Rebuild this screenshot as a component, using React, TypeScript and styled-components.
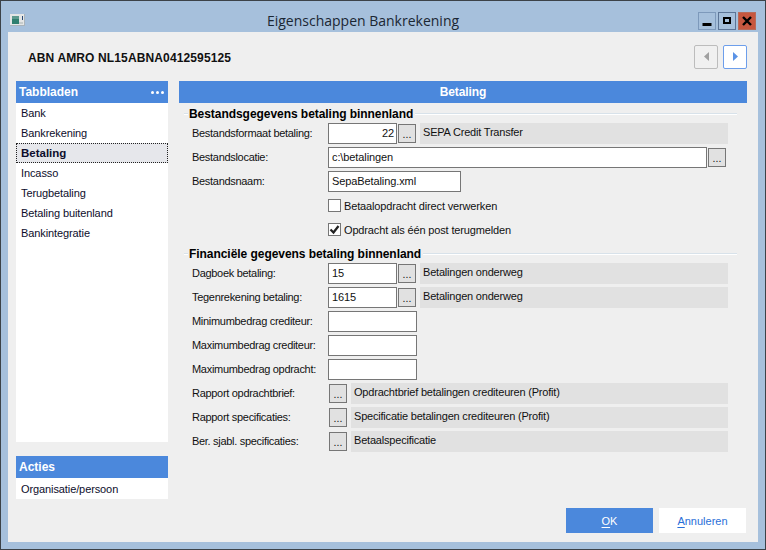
import { createGlobalStyle, styled } from "styled-components";

const GlobalStyle = createGlobalStyle`
  html, body {
    margin: 0;
    padding: 0;
  }
  body {
    width: 766px;
    height: 550px;
    overflow: hidden;
    font-family: "Liberation Sans", Arial, sans-serif;
    font-size: 11px;
    color: #111;
  }
`;

const Window = styled.div`
  box-sizing: border-box;
  width: 766px;
  height: 550px;
  display: flex;
  flex-direction: column;
  background: #a6c0dc;
  border: 1px solid #3c4248;
`;

const TitleBar = styled.div`
  height: 31px;
  flex: none;
  display: flex;
  align-items: flex-start;
  padding: 0 9px;
`;

const AppIcon = styled.svg`
  display: block;
  flex: none;
  margin-top: 13px;
`;

const Title = styled.div`
  flex: 1;
  text-align: center;
  padding-left: 3px;
  font-family: "Open Sans", sans-serif;
  font-size: 14px;
  line-height: 20px;
  color: #1b2733;
  margin-top: 10px;
`;

const WindowButtons = styled.div`
  display: flex;
  flex: none;
  gap: 2px;
  margin-top: 11px;
`;

const WindowButton = styled.div<{ $kind: "min" | "max" | "close" }>`
  box-sizing: border-box;
  width: 18px;
  height: 18px;
  display: flex;
  align-items: center;
  justify-content: center;
  background: ${(p) => (p.$kind === "close" ? "#c7573f" : "#a6c0dc")};
  border: 1px solid ${(p) => (p.$kind === "close" ? "#b86b5a" : p.$kind === "max" ? "#5c7597" : "#7d99bb")};
`;

const Client = styled.div`
  flex: 1;
  margin: 0 7px 7px 7px;
  background: #efefef;
  display: flex;
  flex-direction: column;
  padding: 0 11px 9px 8px;
  min-height: 0;
`;

const Header = styled.div`
  height: 49px;
  flex: none;
  display: flex;
  align-items: center;
  justify-content: space-between;
  padding-left: 12px;
`;

const AccountName = styled.div`
  font-weight: bold;
  font-size: 12px;
  letter-spacing: 0.13px;
  margin-top: 2px;
`;

const NavGroup = styled.div`
  display: flex;
  gap: 5px;
`;

const NavButton = styled.div<{ $active?: boolean }>`
  box-sizing: border-box;
  width: 24px;
  height: 24px;
  display: flex;
  align-items: center;
  justify-content: center;
  border-radius: 2px;
  background: ${(p) => (p.$active ? "#fff" : "#f0f0f0")};
  border: 1px solid ${(p) => (p.$active ? "#6d9eeb" : "#bcbcbc")};
`;

const Columns = styled.div`
  flex: 1;
  display: flex;
  gap: 11px;
  min-height: 0;
`;

const Sidebar = styled.div`
  width: 152px;
  flex: none;
  display: flex;
  flex-direction: column;
  gap: 14px;
  padding-bottom: 34px;
`;

const Panel = styled.div<{ $grow?: boolean }>`
  display: flex;
  flex-direction: column;
  background: #fff;
  flex: ${(p) => (p.$grow ? 1 : "none")};
`;

const PanelHeader = styled.div`
  height: 22px;
  flex: none;
  display: flex;
  align-items: center;
  justify-content: space-between;
  padding: 0 4px 0 3px;
  background: #4b88dc;
  color: #fff;
  font-weight: bold;
  font-size: 12px;
`;

const Dots = styled.span`
  display: flex;
  gap: 2px;
`;

const Dot = styled.i`
  width: 3px;
  height: 3px;
  background: #fff;
  border-radius: 50%;
`;

const TabItem = styled.div<{ $selected?: boolean }>`
  box-sizing: border-box;
  height: 20px;
  display: flex;
  align-items: center;
  padding-left: 4px;
  color: #0d0d2b;
  letter-spacing: ${(p) => (p.$selected ? "0" : "-0.1px")};
  font-size: ${(p) => (p.$selected ? "11.5px" : "11px")};
  font-weight: ${(p) => (p.$selected ? "bold" : "normal")};
  background: ${(p) => (p.$selected ? "#e6e7eb" : "transparent")};
  border: 1px dotted ${(p) => (p.$selected ? "#222" : "transparent")};
`;

const ActionItem = styled(TabItem)`
  height: 21px;
`;

const Main = styled.div`
  flex: 1;
  display: flex;
  flex-direction: column;
  min-width: 0;
`;

const MainHeader = styled.div`
  height: 22px;
  flex: none;
  display: flex;
  align-items: center;
  justify-content: center;
  background: #4b88dc;
  color: #fff;
  font-weight: bold;
  font-size: 12px;
  letter-spacing: -0.1px;
`;

const Form = styled.div`
  flex: 1;
  display: flex;
  flex-direction: column;
  padding-left: 5px;
`;

const GroupTitle = styled.div`
  height: 18px;
  display: flex;
  align-items: center;
  width: 553px;
  margin-top: 2px;
  font-weight: bold;
  font-size: 12px;
  letter-spacing: -0.05px;
  color: #000;

  &::before {
    content: "";
    width: 4px;
    margin-right: 1px;
    flex: none;
    border-top: 1px solid #d8e2ea;
    border-bottom: 1px solid #fff;
  }
  &::after {
    content: "";
    flex: 1;
    margin-left: 2px;
    border-top: 1px solid #d8e2ea;
    border-bottom: 1px solid #fff;
  }
`;

const Row = styled.div`
  box-sizing: border-box;
  height: 24px;
  display: flex;
  align-items: flex-start;
  padding-left: 8px;
`;

const Label = styled.div`
  width: 136px;
  flex: none;
  line-height: 20px;
  letter-spacing: -0.3px;
  white-space: nowrap;
`;

const Input = styled.div<{ $width: number; $right?: boolean }>`
  box-sizing: border-box;
  width: ${(p) => p.$width}px;
  height: 21px;
  flex: none;
  background: #fff;
  border: 1px solid #767676;
  padding: 0 2px 0 3px;
  line-height: 19px;
  letter-spacing: -0.1px;
  text-align: ${(p) => (p.$right ? "right" : "left")};
`;

const DotsButton = styled.div`
  box-sizing: border-box;
  width: 18px;
  height: 19px;
  flex: none;
  margin: 1px 0 0 1px;
  background: #e1e1e1;
  border: 1px solid #767676;
  text-align: center;
  line-height: 19px;
  font-size: 10.5px;
`;

const Description = styled.div`
  box-sizing: border-box;
  flex: 1;
  height: 21px;
  margin-left: 4px;
  margin-right: 19px;
  padding-left: 3px;
  background: #e1e1e1;
  line-height: 18px;
  letter-spacing: -0.2px;
  white-space: nowrap;
`;

const CheckRow = styled(Row)`
  align-items: center;
  padding-left: 144px;
  padding-bottom: 3px;
  gap: 3px;
  letter-spacing: -0.15px;
`;

const CheckBox = styled.div`
  box-sizing: border-box;
  width: 13px;
  height: 13px;
  flex: none;
  background: #fff;
  border: 1px solid #767676;
  display: flex;
  align-items: center;
  justify-content: center;
`;

const Footer = styled.div`
  display: flex;
  justify-content: flex-end;
  gap: 6px;
  margin-right: 1px;
  flex: none;
`;

const FooterButton = styled.div<{ $primary?: boolean }>`
  width: 87px;
  height: 25px;
  display: flex;
  align-items: center;
  justify-content: center;
  background: ${(p) => (p.$primary ? "#4b88dc" : "#fff")};
  color: ${(p) => (p.$primary ? "#fff" : "#2a6fd8")};
  u {
    text-underline-offset: 2px;
  }
`;

const tabs = [
  "Bank",
  "Bankrekening",
  "Betaling",
  "Incasso",
  "Terugbetaling",
  "Betaling buitenland",
  "Bankintegratie",
];

export default function App() {
  return (
    <>
      <GlobalStyle />
      <Window>
        <TitleBar>
          <AppIcon width="15" height="12" viewBox="0 0 15 12">
            <rect width="15" height="12" fill="#e4e6e6" />
            <rect x="14" width="1" height="12" fill="#a9b3ba" />
            <rect y="11" width="15" height="1" fill="#a9b3ba" />
            <rect x="2" y="2" width="7" height="8" fill="#2f7f6f" />
            <rect x="2" y="2" width="7" height="3" fill="#5d9a8e" />
            <rect x="12" y="2" width="1" height="4" fill="#2a4a75" />
            <rect x="9" y="8" width="4" height="2" fill="#c6cccc" />
          </AppIcon>
          <Title>Eigenschappen Bankrekening</Title>
          <WindowButtons>
            <WindowButton $kind="min">
              <svg width="10" height="10" viewBox="0 0 10 10">
                <rect x="0.5" y="7" width="9" height="3" fill="#000" />
              </svg>
            </WindowButton>
            <WindowButton $kind="max">
              <svg width="10" height="10" viewBox="0 0 10 10">
                <path d="M1 1h8v7H1z M3 3v3h4V3z" fill="#000" fillRule="evenodd" />
              </svg>
            </WindowButton>
            <WindowButton $kind="close">
              <svg width="12" height="10" viewBox="0 0 12 10">
                <path d="M2 1l8 8M10 1l-8 8" stroke="#000" strokeWidth="2.4" />
              </svg>
            </WindowButton>
          </WindowButtons>
        </TitleBar>
        <Client>
          <Header>
            <AccountName>ABN AMRO NL15ABNA0412595125</AccountName>
            <NavGroup>
              <NavButton>
                <svg width="5" height="9" viewBox="0 0 5 9">
                  <path d="M5 0v9L0 4.5z" fill="#a0a0a0" />
                </svg>
              </NavButton>
              <NavButton $active>
                <svg width="5" height="9" viewBox="0 0 5 9">
                  <path d="M0 0v9l5-4.5z" fill="#5b93e6" />
                </svg>
              </NavButton>
            </NavGroup>
          </Header>
          <Columns>
            <Sidebar>
              <Panel $grow>
                <PanelHeader>
                  Tabbladen
                  <Dots>
                    <Dot />
                    <Dot />
                    <Dot />
                  </Dots>
                </PanelHeader>
                {tabs.map((t) => (
                  <TabItem key={t} $selected={t === "Betaling"}>
                    {t}
                  </TabItem>
                ))}
              </Panel>
              <Panel>
                <PanelHeader>Acties</PanelHeader>
                <ActionItem>Organisatie/persoon</ActionItem>
              </Panel>
            </Sidebar>
            <Main>
              <MainHeader>Betaling</MainHeader>
              <Form>
                <GroupTitle>Bestandsgegevens betaling binnenland</GroupTitle>
                <Row>
                  <Label>Bestandsformaat betaling:</Label>
                  <Input $width={69} $right>22</Input>
                  <DotsButton>...</DotsButton>
                  <Description>SEPA Credit Transfer</Description>
                </Row>
                <Row>
                  <Label>Bestandslocatie:</Label>
                  <Input $width={379}>c:\betalingen</Input>
                  <DotsButton>...</DotsButton>
                </Row>
                <Row>
                  <Label>Bestandsnaam:</Label>
                  <Input $width={133}>SepaBetaling.xml</Input>
                </Row>
                <CheckRow>
                  <CheckBox />
                  Betaalopdracht direct verwerken
                </CheckRow>
                <CheckRow>
                  <CheckBox>
                    <svg width="11" height="11" viewBox="0 0 11 11">
                      <path d="M1.5 5.5l3 3L9.5 2" fill="none" stroke="#222" strokeWidth="2.2" />
                    </svg>
                  </CheckBox>
                  Opdracht als één post terugmelden
                </CheckRow>
                <GroupTitle>Financiële gegevens betaling binnenland</GroupTitle>
                <Row>
                  <Label>Dagboek betaling:</Label>
                  <Input $width={69}>15</Input>
                  <DotsButton>...</DotsButton>
                  <Description>Betalingen onderweg</Description>
                </Row>
                <Row>
                  <Label>Tegenrekening betaling:</Label>
                  <Input $width={69}>1615</Input>
                  <DotsButton>...</DotsButton>
                  <Description>Betalingen onderweg</Description>
                </Row>
                <Row>
                  <Label>Minimumbedrag crediteur:</Label>
                  <Input $width={89} />
                </Row>
                <Row>
                  <Label>Maximumbedrag crediteur:</Label>
                  <Input $width={89} />
                </Row>
                <Row>
                  <Label>Maximumbedrag opdracht:</Label>
                  <Input $width={89} />
                </Row>
                <Row>
                  <Label>Rapport opdrachtbrief:</Label>
                  <DotsButton>...</DotsButton>
                  <Description>Opdrachtbrief betalingen crediteuren (Profit)</Description>
                </Row>
                <Row>
                  <Label>Rapport specificaties:</Label>
                  <DotsButton>...</DotsButton>
                  <Description>Specificatie betalingen crediteuren (Profit)</Description>
                </Row>
                <Row>
                  <Label>Ber. sjabl. specificaties:</Label>
                  <DotsButton>...</DotsButton>
                  <Description>Betaalspecificatie</Description>
                </Row>
              </Form>
              <Footer>
                <FooterButton $primary>
                  <span><u>O</u>K</span>
                </FooterButton>
                <FooterButton>
                  <span><u>A</u>nnuleren</span>
                </FooterButton>
              </Footer>
            </Main>
          </Columns>
        </Client>
      </Window>
    </>
  );
}
